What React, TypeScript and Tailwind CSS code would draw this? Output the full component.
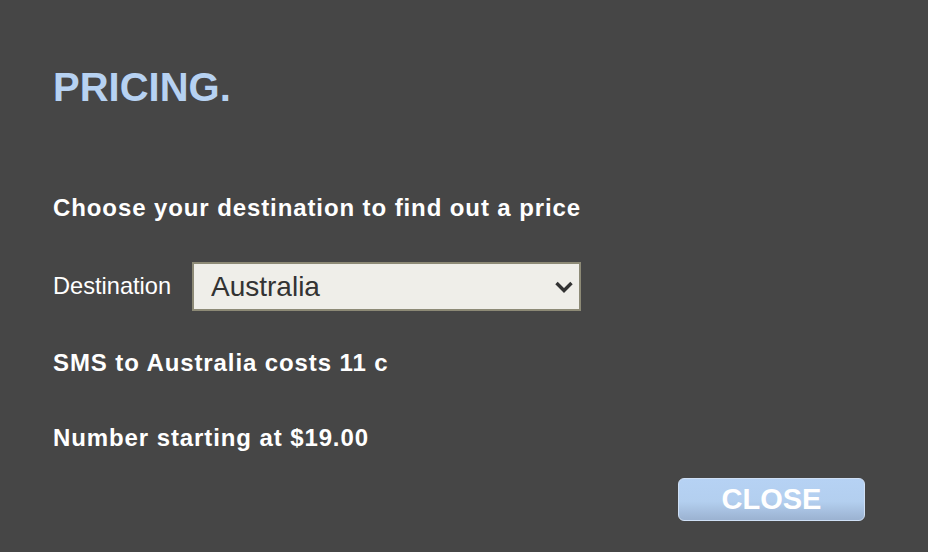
import React from 'react';

const App: React.FC = () => {
  return (
    <div className="w-[928px] h-[552px] bg-[#464646] pl-[53px] pt-[67px] font-['Liberation_Sans',Arial,sans-serif] text-white overflow-hidden">
      {/* Title */}
      <h1 className="text-[40px] leading-none font-bold text-[#b7d2f2]">PRICING.</h1>

      <p className="mt-[89px] text-[24px] leading-none font-bold tracking-[0.9px]">Choose your destination to find out a price</p>

      {/* Destination picker */}
      <div className="mt-[42px] flex items-center">
        <label className="w-[139px] text-[23.6px] leading-none">Destination</label>
        <div className="relative w-[389px] h-[49px]">
          <select
            defaultValue="Australia"
            className="appearance-none w-full h-full bg-[#efeee9] border-2 border-[#8d8a76] pl-[17px] text-[28px] leading-none text-[#333] outline-none font-['Liberation_Sans',Arial,sans-serif]"
          >
            <option>Australia</option>
            <option>New Zealand</option>
            <option>United Kingdom</option>
            <option>United States</option>
          </select>
          <svg
            className="absolute right-[7px] top-[18px] pointer-events-none"
            width="20"
            height="14"
            viewBox="0 0 20 14"
          >
            <polyline points="2.5,3 10,10.5 17.5,3" fill="none" stroke="#333" strokeWidth="3.4" />
          </svg>
        </div>
      </div>

      <p className="mt-[40px] text-[24px] leading-none font-bold tracking-[0.9px]">SMS to Australia costs 11 c</p>
      <p className="mt-[51px] text-[24px] leading-none font-bold tracking-[0.9px]">Number starting at $19.00</p>

      <div className="mt-[28px] flex justify-end pr-[63px]">
        <button className="w-[187px] h-[43px] rounded-[6px] border border-[#cfe0f6] bg-linear-to-b from-[#b6d2f4] via-[#b3cfef] via-55% to-[#9bb2d1] text-white text-[29px] leading-none font-bold">
          CLOSE
        </button>
      </div>
    </div>
  );
};

export default App;
